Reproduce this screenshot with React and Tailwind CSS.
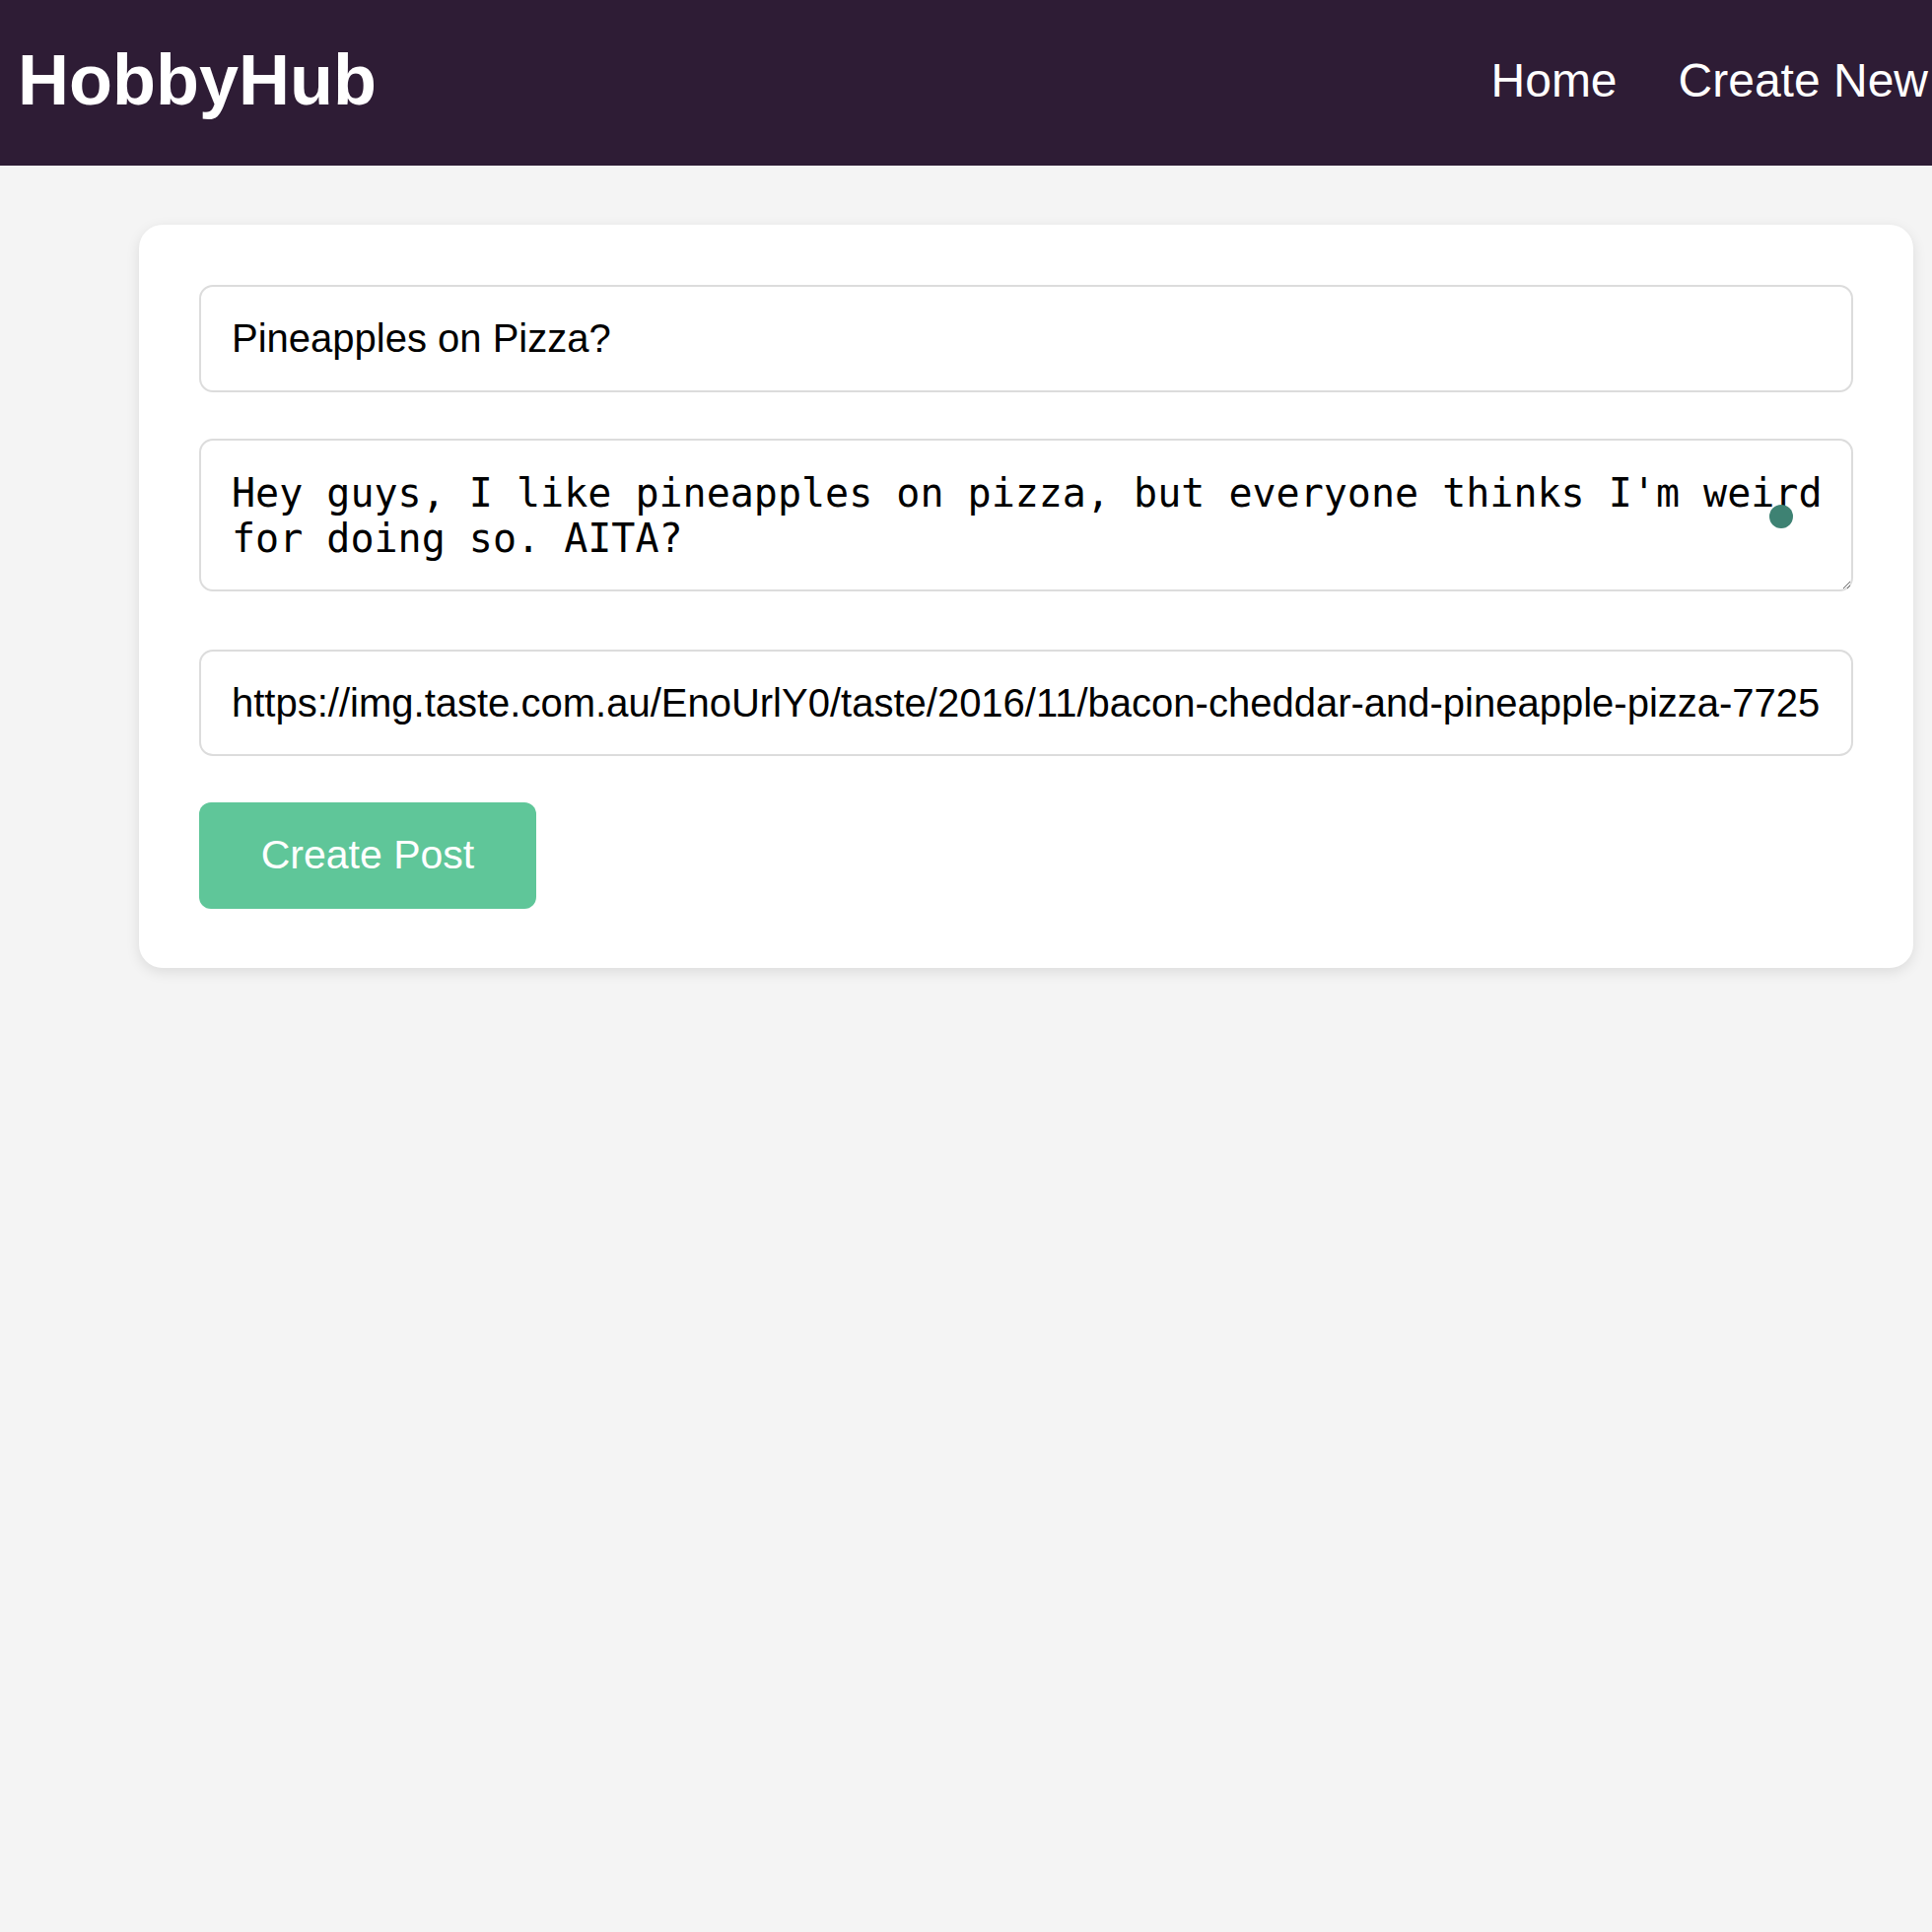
export default function App() {
  return (
    <div className="min-h-screen bg-[#f4f4f4]" style={{ fontFamily: '"Liberation Sans", Arial, sans-serif' }}>
      <header className="h-[168px] bg-[#2e1c35] flex items-center justify-between pl-[18px] pr-[4px]">
        <h1 className="text-[72px] font-bold text-white leading-none -mt-[6px]">HobbyHub</h1>
        <nav className="flex items-center gap-[62px] text-[48px] text-white leading-none -mt-[4px]">
          <a href="#" className="text-white">Home</a>
          <a href="#" className="text-white">Create New</a>
        </nav>
      </header>
      <div className="ml-[141px] mt-[60px] w-[1800px] bg-white rounded-[24px] shadow-[0_4px_14px_rgba(0,0,0,0.1)] p-[61px] pt-[61px] pb-[60px]">
        <input
          type="text"
          defaultValue="Pineapples on Pizza?"
          className="block w-[1678px] h-[109px] border-2 border-[#dcdcdc] rounded-[14px] px-[31px] text-[40px] text-black outline-none"
          style={{ fontFamily: '"Liberation Sans", Arial, sans-serif' }}
        />
        <div className="relative mt-[47px]">
          <textarea
            defaultValue="Hey guys, I like pineapples on pizza, but everyone thinks I'm weird for doing so. AITA?"
            className="block w-[1678px] h-[155px] border-2 border-[#dcdcdc] rounded-[14px] pl-[31px] pr-[16px] pt-[30px] text-[40px] text-black outline-none"
            style={{ fontFamily: '"DejaVu Sans Mono", monospace', lineHeight: 'normal' }}
          />
          <span className="absolute left-[1593px] top-[67px] w-[24px] h-[24px] rounded-full bg-[#3e8273]" />
        </div>
        <input
          type="text"
          defaultValue="https://img.taste.com.au/EnoUrlY0/taste/2016/11/bacon-cheddar-and-pineapple-pizza-77250-1.jpeg"
          className="block mt-[59px] w-[1678px] h-[108px] border-2 border-[#dcdcdc] rounded-[14px] px-[31px] text-[40px] text-black outline-none"
          style={{ fontFamily: '"Liberation Sans", Arial, sans-serif' }}
        />
        <button
          className="block mt-[47px] w-[342px] h-[108px] rounded-[12px] bg-[#5fc699] text-white text-[41px]"
          style={{ fontFamily: '"Liberation Sans", Arial, sans-serif' }}
        >
          Create Post
        </button>
      </div>
    </div>
  );
}
